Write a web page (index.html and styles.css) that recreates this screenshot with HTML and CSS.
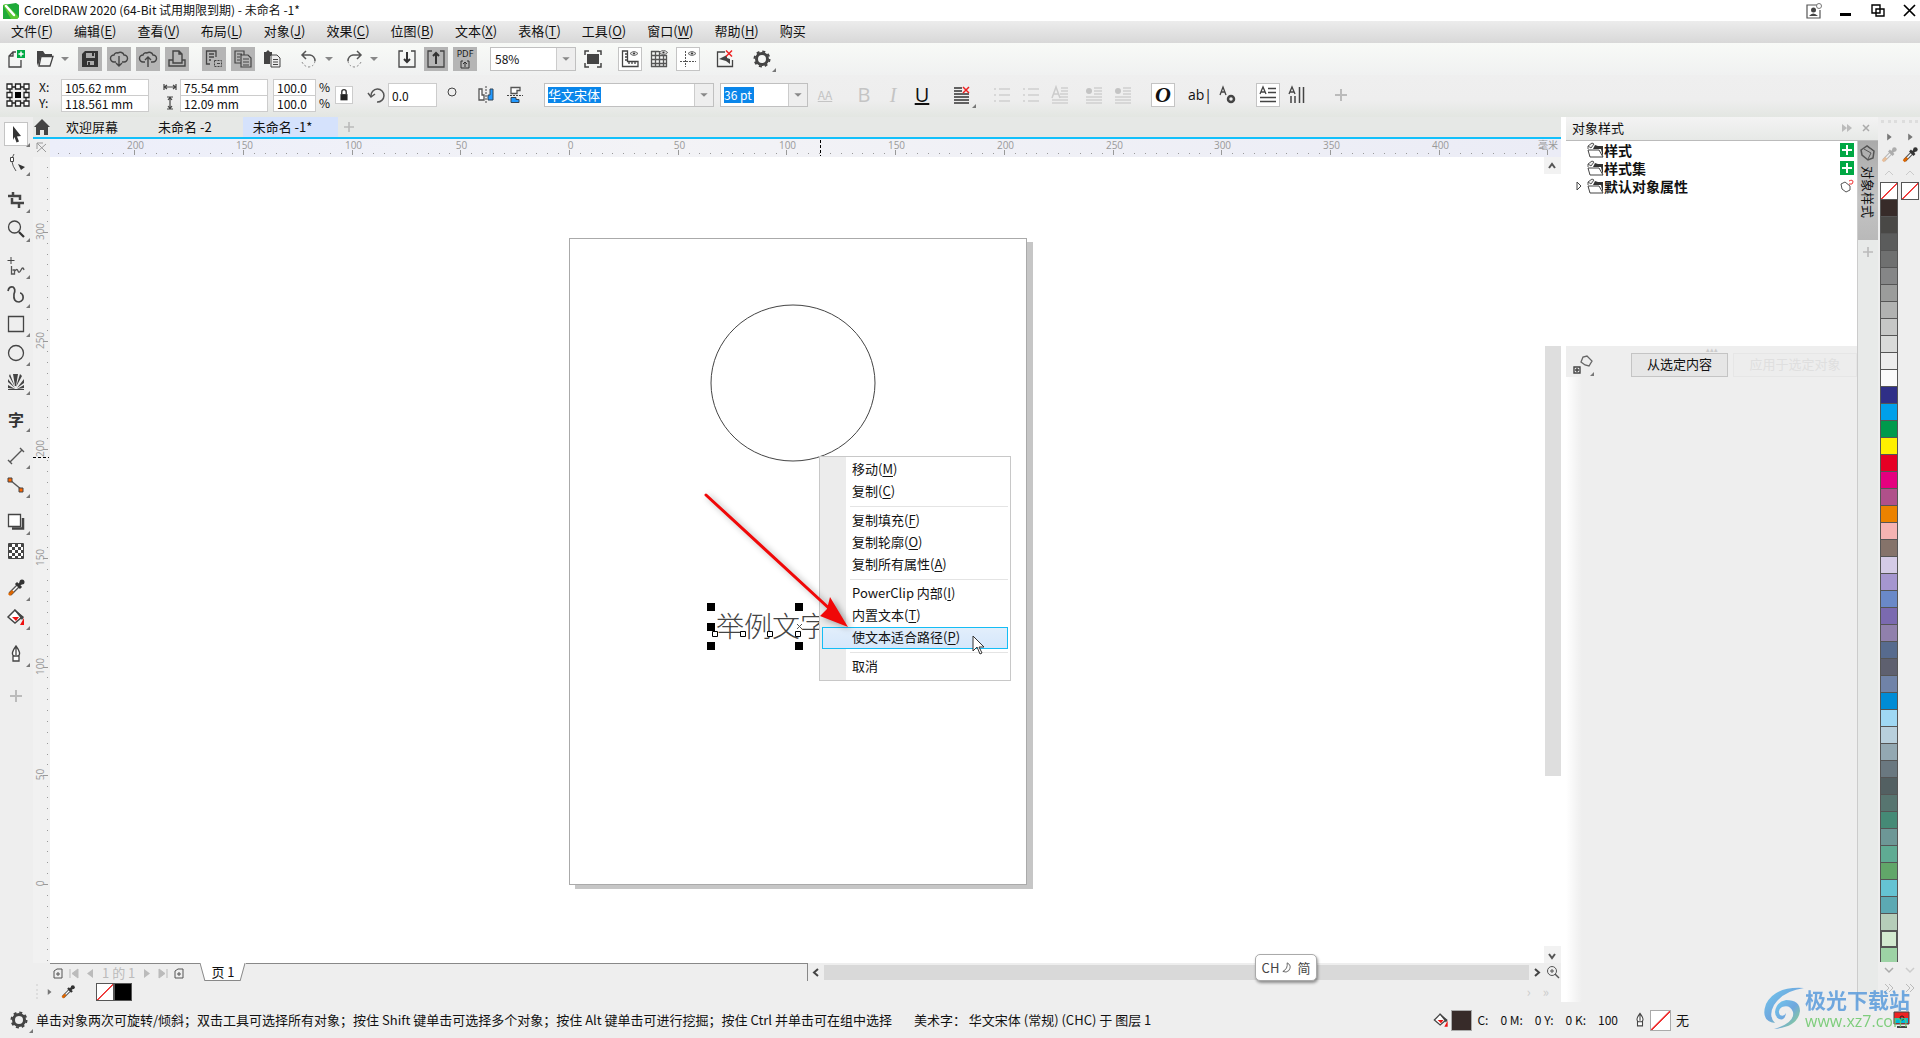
FILE: index.html
```html
<!DOCTYPE html>
<html lang="zh-Hans">
<head>
    <meta charset="UTF-8">
    <meta name="viewport" content="width=device-width, initial-scale=1.0">
    <title>CorelDRAW 2020</title>
    <link rel="stylesheet" href="styles.css">
</head>
<body>
    <svg class="sprite" aria-hidden="true">
        <symbol id="i-new" viewBox="0 0 24 24"><path d="M12 5H9L5 9v11h12v-7M9 5v4H5" fill="none" stroke="#444" stroke-width="1.3"/><path d="M13 3h8v8h-8z" fill="#0a4"/><path d="M17 4.500v5M14.500 7h5" stroke="#fff" stroke-width="1.500"/></symbol>
        <symbol id="i-open" viewBox="0 0 24 24"><path d="M4 4h6l2 3h7v2H8L5 19l-1-3z" fill="#444"/><path d="M8 9.500h12L17 19H6z" fill="none" stroke="#444" stroke-width="1.300"/></symbol>
        <symbol id="i-caret" viewBox="0 0 16 24"><path d="M4 10h8l-4 4z" fill="#888"/></symbol>
        <symbol id="i-save" viewBox="0 0 24 24"><path d="M4 7l3-3h13v16H4z" fill="#333"/><path d="M8 6h9v5H8zM9 14h7v4H9z" fill="#aaa"/><path d="M14 6h2v3h-2zM10 15h2v3h-2z" fill="#333"/></symbol>
        <symbol id="i-down" viewBox="0 0 24 24"><path d="M9 15H7a3.500 3.500 0 0 1 0-7 3 3 0 0 1 4-2 4 4 0 0 1 6 2 3.500 3.500 0 0 1 0 7h-2M12 9v10M9 16l3 3 3-3" fill="none" stroke="#444" stroke-width="1.400"/></symbol>
        <symbol id="i-up" viewBox="0 0 24 24"><path d="M9 15H7a3.500 3.500 0 0 1 0-7 3 3 0 0 1 4-2 4 4 0 0 1 6 2 3.500 3.500 0 0 1 0 7h-2M12 20V10M9 13l3-3 3 3" fill="none" stroke="#444" stroke-width="1.400"/></symbol>
        <symbol id="i-print" viewBox="0 0 24 24"><path d="M8 13V4h6l3 3v6M14 4v3h3M4 13h4v3h9v-3h3v6H4z" fill="none" stroke="#444" stroke-width="1.400"/></symbol>
        <symbol id="i-cut" viewBox="0 0 24 24"><path d="M8 17H4.500V4H14v6M7 7h5M7 10h5M7 13h2" fill="none" stroke="#444" stroke-width="1.300"/><path d="M12.500 13.500h7v6h-7z" fill="none" stroke="#444" stroke-dasharray="2 1"/><path d="M15 16.500h3" stroke="#444"/></symbol>
        <symbol id="i-copy" viewBox="0 0 24 24"><path d="M10 16H4V4h9v4M6 7h5M6 10h3M6 13h3M10 8h7l3 3v9H10zM12 12h6M12 15h6M12 18h6" fill="none" stroke="#444" stroke-width="1.200"/></symbol>
        <symbol id="i-paste" viewBox="0 0 24 24"><path d="M4 5h2l2-2 2 2h2v4H10v8H4z" fill="#444"/><path d="M11 8h6l3 3v9h-9zM13 12.500h5M13 15h5M13 17.500h5" fill="#eee" stroke="#444"/></symbol>
        <symbol id="i-undo" viewBox="0 0 24 24"><path d="M9 4L5 8l4 4M5.500 8H13a6 6 0 0 1 5 6" fill="none" stroke="#555" stroke-width="1.500"/><path d="M18 14q-1 6-7 6-4-1-6-5" fill="none" stroke="#888" stroke-dasharray="2 2"/></symbol>
        <symbol id="i-redo" viewBox="0 0 24 24"><path d="M15 4l4 4-4 4M18.500 8H11a6 6 0 0 0-5 6" fill="none" stroke="#555" stroke-width="1.500"/><path d="M6 14q1 6 7 6 4-1 6-5" fill="none" stroke="#888" stroke-dasharray="2 2"/></symbol>
        <symbol id="i-import" viewBox="0 0 24 24"><path d="M8 4H4v16h16V4h-4" fill="none" stroke="#444" stroke-width="1.300"/><path d="M12 5v10M9 12l3 3 3-3" fill="none" stroke="#333" stroke-width="2"/></symbol>
        <symbol id="i-export" viewBox="0 0 24 24"><path d="M8 4H4v16h16V4h-4" fill="none" stroke="#444" stroke-width="1.300"/><path d="M12 17V6M9 9l3-3 3 3" fill="none" stroke="#333" stroke-width="2"/></symbol>
        <symbol id="i-fit" viewBox="0 0 24 24"><path d="M6 7h12v10H6z" fill="#444"/><path d="M4 8V4h4M16 4h4v4M20 16v4h-4M8 20H4v-4" fill="none" stroke="#444" stroke-width="1.500"/></symbol>
        <symbol id="i-eye" viewBox="0 0 10 6"><path d="M0 3q5-5 10 0-5 5-10 0z" fill="#ddd" stroke="#555"/><circle cx="5" cy="3" r="1.300" fill="#333"/></symbol>
        <symbol id="i-ruler" viewBox="0 0 24 24"><path d="M4.500 4v15.500H20v-5H9.500V4zM9 7H7M9 10H7M9 13H7M11 15v2M14 15v2M17 15v2" fill="none" stroke="#444" stroke-width="1.300"/><use href="#i-eye" x="12" y="4" width="8" height="5"/></symbol>
        <symbol id="i-grid" viewBox="0 0 24 24"><path d="M4 4.500h8M4 8.500h16M4 12.500h16M4 16.500h16M4 19.500h16M4.500 4v16M8.500 4v16M12.500 4v16M16.500 8v12M19.500 8v12" stroke="#555" stroke-width="1.300"/><use href="#i-eye" x="12" y="3" width="9" height="5"/></symbol>
        <symbol id="i-guide" viewBox="0 0 24 24"><path d="M4 14.500h16M9.500 4v16" stroke="#555" stroke-dasharray="2 1"/><use href="#i-eye" x="12" y="4" width="8" height="5"/></symbol>
        <symbol id="i-snap" viewBox="0 0 24 24"><path d="M12 5H4.500v14.500h15V13" fill="none" stroke="#444" stroke-width="1.300"/><path d="M6 12l8-4v3l3 1v5l-4-3z" fill="#444"/><path d="M13 3.500l6 6M19 3.500l-6 6" stroke="#e22" stroke-width="1.500"/></symbol>
        <symbol id="i-gear" viewBox="0 0 24 24"><circle cx="12" cy="12" r="5.500" fill="none" stroke="#444" stroke-width="3"/><circle cx="12" cy="12" r="7.500" fill="none" stroke="#444" stroke-width="2" stroke-dasharray="3 2.900"/></symbol>
        <symbol id="i-origin" viewBox="0 0 24 24"><path d="M4 4h16v16H4z" fill="none" stroke="#222" stroke-width="1.300"/><path d="M1 1h5v5H1zM9.500 1h5v5h-5zM18 1h5v5h-5zM1 9.500h5v5H1zM18 9.500h5v5h-5zM1 18h5v5H1zM9.500 18h5v5h-5zM18 18h5v5h-5z" fill="#fff" stroke="#222" stroke-width="1.300"/><path d="M9 9h6v6H9z"/></symbol>
        <symbol id="i-wide" viewBox="0 0 14 14"><path d="M1 4v6M13 4v6M1 7h12M4 5L1.500 7 4 9M10 5l2.500 2L10 9" fill="none" stroke="#444" stroke-width="1.200"/></symbol>
        <symbol id="i-tall" viewBox="0 0 14 14"><path d="M4 1h6M4 13h6M7 1v12M5 4l2-2.500L9 4M5 10l2 2.500L9 10" fill="none" stroke="#444" stroke-width="1.200"/></symbol>
        <symbol id="i-lock" viewBox="0 0 18 18"><path d="M5 8h8v7H5z" fill="#222"/><path d="M6.500 8V5.500a2.500 2.500 0 0 1 5 0V8" fill="none" stroke="#333" stroke-width="1.500"/></symbol>
        <symbol id="i-rot" viewBox="0 0 24 24"><path d="M7 13a6.500 6.500 0 1 1 6 6" fill="none" stroke="#555" stroke-width="1.500"/><path d="M4 10l3 4 4-3" fill="none" stroke="#555" stroke-width="1.500"/></symbol>
        <symbol id="i-mirh" viewBox="0 0 24 24"><path d="M5 6v11h5v-5H8V6z" fill="#fff" stroke="#555" stroke-width="1.300"/><path d="M19 6v11h-5v-5h2V6z" fill="#29f" stroke="#345"/><path d="M12 3v18" stroke="#444" stroke-dasharray="2 1"/></symbol>
        <symbol id="i-mirv" viewBox="0 0 24 24"><path d="M17 4.500H8v6h6v-3h3z" fill="#fff" stroke="#555" stroke-width="1.300"/><path d="M16 19.500H8v-5h5v2h3z" fill="#29f" stroke="#345"/><path d="M4 12.500h16" stroke="#444" stroke-dasharray="2 1"/></symbol>
        <symbol id="i-nolist" viewBox="0 0 24 24"><path d="M4 5h8M4 8h8M4 11h15M4 14h15M4 17h15M4 20h15" stroke="#333" stroke-width="1.700"/><path d="M13 4l6 6M19 4l-6 6" stroke="#e22" stroke-width="1.500"/></symbol>
        <symbol id="i-list" viewBox="0 0 24 24"><path d="M9 6h11M9 12h11M9 18h11M4 6h2M4 12h2M4 18h2" stroke="#d0d0d0" stroke-width="1.500"/></symbol>
        <symbol id="i-drop" viewBox="0 0 24 24"><path d="M13 5h7M13 8h7M12 11h8M12 14h8M4 17h16M4 20h16" stroke="#d0d0d0" stroke-width="1.500"/><path d="M4 15l4-11 4 11M6 11h4" fill="none" stroke="#ccc" stroke-width="1.500"/></symbol>
        <symbol id="i-indent" viewBox="0 0 24 24"><path d="M12 5h8M12 8h8M12 11h8M4 14h16M4 17h16M4 20h16" stroke="#d0d0d0" stroke-width="1.500"/><circle cx="7" cy="8" r="3" fill="#c4c4c4"/></symbol>
        <symbol id="i-agear" viewBox="0 0 24 24"><path d="M4 12L7 4l3 8M5 9h4" fill="none" stroke="#444" stroke-width="1.300"/><circle cx="15" cy="16" r="3" fill="none" stroke="#444" stroke-width="2.500"/></symbol>
        <symbol id="i-horz" viewBox="0 0 24 24"><path d="M4 11l3-7 3 7M5 9h4" fill="none" stroke="#444" stroke-width="1.300"/><path d="M12 5.500h8M12 9.500h8M4 14.500h16M4 18.500h16" stroke="#444" stroke-width="1.500"/></symbol>
        <symbol id="i-vert" viewBox="0 0 24 24"><path d="M4 11l3-7 3 7M5 9h4" fill="none" stroke="#444" stroke-width="1.300"/><path d="M6 13v7M10 13v7M14.500 4v16M18.500 4v16" stroke="#444" stroke-width="1.500"/></symbol>
        <symbol id="i-plus" viewBox="0 0 24 24"><path d="M12 6v12M6 12h12" stroke="#bbb" stroke-width="2"/></symbol>
        <symbol id="i-pick" viewBox="0 0 24 24"><path d="M9 4l8 10-4 .5 2 5-2.500 1-2-5.500L9 18z" fill="#333"/></symbol>
        <symbol id="i-shape" viewBox="0 0 24 24"><path d="M10 3q-5 7 2 17" fill="none" stroke="#555"/><path d="M6.500 6.500h3v4h-3z" fill="#fff" stroke="#444"/><path d="M14 13l7 3-4 3z" fill="#333"/></symbol>
        <symbol id="i-crop" viewBox="0 0 24 24"><path d="M4 8h5V4M9 8h7v4M8 10v5h6M20 15h-5v5" fill="none" stroke="#444" stroke-width="2.500"/></symbol>
        <symbol id="i-zoom" viewBox="0 0 24 24"><circle cx="10.500" cy="10" r="6" fill="none" stroke="#444" stroke-width="1.300"/><path d="M15 15l5 5" stroke="#333" stroke-width="2.200"/></symbol>
        <symbol id="i-free" viewBox="0 0 24 24"><path d="M7 3v7M3.500 6.500h7" fill="none" stroke="#444"/><path d="M7.500 12v8h3v-4h-2M11 17q2-3 3 0t3-1 3 0" fill="none" stroke="#555" stroke-width="1.300"/></symbol>
        <symbol id="i-art" viewBox="0 0 24 24"><path d="M4 8q1-5 5-4 3 2 1 7-1 8 5 8 5-1 4-6-1-3-3-3" fill="none" stroke="#444" stroke-width="1.700"/></symbol>
        <symbol id="i-rect" viewBox="0 0 24 24"><path d="M4.500 4.500h15v15h-15z" fill="none" stroke="#444" stroke-width="1.300"/></symbol>
        <symbol id="i-ell" viewBox="0 0 24 24"><circle cx="12" cy="12" r="7.500" fill="none" stroke="#444" stroke-width="1.300"/></symbol>
        <symbol id="i-fan" viewBox="0 0 24 24"><path d="M11 19L4 15v3zM11 18L4 9v3zM11 17L6 4 5 6zM11 16L9 4h5l-2 12zM12 17l4-13 2 2zM13 18l7-9v4zM13 19l7-4v3zM4 19h16v1H4z" fill="#444"/></symbol>
        <symbol id="i-line" viewBox="0 0 24 24"><path d="M6 18L18 6M4 16l4 4M16 4l4 4" stroke="#555" stroke-width="1.400"/></symbol>
        <symbol id="i-conn" viewBox="0 0 24 24"><path d="M6 7l12 10" stroke="#555" stroke-width="1.400"/><path d="M4 5h4v4H4zM15 15h4v4h-4z" fill="#f60" stroke="#444"/></symbol>
        <symbol id="i-shad" viewBox="0 0 24 24"><path d="M8 18.500h11V8" fill="none" stroke="#444" stroke-width="2.500"/><path d="M4.500 4.500h12v12h-12z" fill="#fff" stroke="#444" stroke-width="1.300"/></symbol>
        <symbol id="i-trans" viewBox="0 0 24 24"><path d="M4.500 4.500h15v15h-15z" fill="#fff" stroke="#444"/><path d="M5 6.500h14M5 12.500h14M5 18.500h14" stroke="#444" stroke-width="3" stroke-dasharray="3 3"/><path d="M8 9.500h11M8 15.500h11" stroke="#444" stroke-width="3" stroke-dasharray="3 3"/></symbol>
        <symbol id="i-drip" viewBox="0 0 24 24"><path d="M6 18l9-9" stroke="#555" stroke-width="4"/><path d="M8.500 15.500l6-6" stroke="#fff" stroke-width="1.500"/><path d="M5 19l4-4" stroke="#d60" stroke-width="3"/><path d="M12 7l5 5M14 10l4-4" stroke="#333" stroke-width="3"/><circle cx="18" cy="6" r="2.500" fill="#333"/></symbol>
        <symbol id="i-fill" viewBox="0 0 24 24"><path d="M4 12l7-7 7 7-7 6z" fill="#fff" stroke="#444" stroke-width="1.500"/><path d="M10 4l10 8-2 3-7-9z" fill="#444"/><path d="M8 12h7l-3 4zM20 13v7h-4z" fill="#e11"/></symbol>
        <symbol id="i-pen" viewBox="0 0 24 24"><path d="M12 4q6 8 2 10h-4Q6 12 12 4zM9 14h6v5H9zM12 6v7" fill="#fff" stroke="#444" stroke-width="1.300"/></symbol>
        <symbol id="i-folder" viewBox="0 0 18 18"><path d="M7 8l2-4 3 1h5v12l-2-9z" fill="#333"/><path d="M2 9h11l4 7H4z" fill="#fff" stroke="#444"/><path d="M2 5l4-3 2 1-3 4zM2 5v3" fill="#eee" stroke="#555"/></symbol>
        <symbol id="i-style" viewBox="0 0 18 18"><path d="M2 6l6-4 7 5-1 7-5 2-6-5z" fill="none" stroke="#555" stroke-width="1.500"/><path d="M5 5l7 4-3 6M8 2l7 5" fill="none" stroke="#555"/></symbol>
    </svg>

    <header class="title-bar">
        <svg class="logo" viewBox="0 0 18 18"><path d="M1 3l13-2 3 2v12l-2 2H1z" fill="#1faa3a"/><path d="M1 3l3-1 13 13-2 2H9z" fill="#5cc832"/><path d="M4 4l8 9" stroke="#fff" stroke-width="2.500" stroke-linecap="round"/></svg>
        <h1>CorelDRAW 2020 (64-Bit 试用期限到期) - 未命名 -1*</h1>
        <div class="window-buttons">
            <button aria-label="登录"><svg viewBox="0 0 24 20"><path d="M16 4H5v13h13V9" fill="none" stroke="#555" stroke-width="1.200"/><circle cx="11.500" cy="9" r="2.500" fill="#444"/><path d="M7 15q4-5 9 0z" fill="#444"/><circle cx="17" cy="5" r="2.500" fill="#fff" stroke="#777"/></svg></button>
            <button aria-label="最小化"><svg viewBox="0 0 24 20"><path d="M6 13.500h11" stroke="#000" stroke-width="3"/></svg></button>
            <button aria-label="还原"><svg viewBox="0 0 24 20"><path d="M6 4h8v8H6zM10 8h8v7h-8z" fill="#fff" stroke="#000" stroke-width="1.400"/></svg></button>
            <button aria-label="关闭"><svg viewBox="0 0 24 20"><path d="M6 4l11 11M17 4L6 15" stroke="#000" stroke-width="1.700"/></svg></button>
        </div>
    </header>

    <nav class="menu-bar">
        <button>文件(<u>F</u>)</button>
        <button>编辑(<u>E</u>)</button>
        <button>查看(<u>V</u>)</button>
        <button>布局(<u>L</u>)</button>
        <button>对象(<u>J</u>)</button>
        <button>效果(<u>C</u>)</button>
        <button>位图(<u>B</u>)</button>
        <button>文本(<u>X</u>)</button>
        <button>表格(<u>T</u>)</button>
        <button>工具(<u>O</u>)</button>
        <button>窗口(<u>W</u>)</button>
        <button>帮助(<u>H</u>)</button>
        <button>购买</button>
    </nav>

    <div class="toolbar standard">
        <div class="group"><button class="tool" aria-label="新建"><svg><use href="#i-new"/></svg></button>
            <div class="split"><button class="tool" aria-label="打开"><svg><use href="#i-open"/></svg></button><button class="caret" aria-label="最近"><svg><use href="#i-caret"/></svg></button></div>
            <button class="tool dark" aria-label="保存"><svg><use href="#i-save"/></svg></button>
            <button class="tool dark" aria-label="从云下载"><svg><use href="#i-down"/></svg></button>
            <button class="tool dark" aria-label="上传到云"><svg><use href="#i-up"/></svg></button>
            <button class="tool dark" aria-label="打印"><svg><use href="#i-print"/></svg></button></div>
        <div class="group"><button class="tool dark" aria-label="剪切"><svg><use href="#i-cut"/></svg></button>
            <button class="tool dark" aria-label="复制"><svg><use href="#i-copy"/></svg></button>
            <button class="tool" aria-label="粘贴"><svg><use href="#i-paste"/></svg></button></div>
        <div class="group"><div class="split"><button class="tool" aria-label="撤消"><svg><use href="#i-undo"/></svg></button><button class="caret" aria-label="撤消列表"><svg><use href="#i-caret"/></svg></button></div><div class="split"><button class="tool" aria-label="重做"><svg><use href="#i-redo"/></svg></button><button class="caret" aria-label="重做列表"><svg><use href="#i-caret"/></svg></button></div></div>
        <div class="group"><button class="tool" aria-label="导入"><svg><use href="#i-import"/></svg></button>
            <button class="tool dark" aria-label="导出"><svg><use href="#i-export"/></svg></button>
            <button class="tool dark pdf" aria-label="发布为 PDF"><span>PDF</span><svg viewBox="0 0 10 9"><path d="M3 1H1v7h8V1H7M5 7V2M3 4l2-2 2 2" fill="none" stroke="#333"/></svg></button></div>
        <div class="group"><div class="combo zoom-level"><input aria-label="缩放级别" value="58%"><button aria-label="展开"><svg><use href="#i-caret"/></svg></button></div>
            <button class="tool" aria-label="全屏预览"><svg><use href="#i-fit"/></svg></button></div>
        <div class="group"><button class="tool on" aria-label="标尺"><svg><use href="#i-ruler"/></svg></button>
            <button class="tool" aria-label="网格"><svg><use href="#i-grid"/></svg></button>
            <button class="tool on" aria-label="辅助线"><svg><use href="#i-guide"/></svg></button></div>
        <div class="group"><button class="tool" aria-label="贴齐关闭"><svg><use href="#i-snap"/></svg></button></div>
        <div class="group"><button class="tool fly" aria-label="选项"><svg><use href="#i-gear"/></svg></button></div>
    </div>

    <div class="toolbar property">
        <button class="tool" aria-label="对象原点"><svg><use href="#i-origin"/></svg></button>
        <div class="pair position">
            <label for="posX">X:</label><input id="posX" value="105.62 mm">
            <label for="posY">Y:</label><input id="posY" value="118.561 mm">
        </div>
        <div class="pair size">
            <label for="sizeW"><svg><use href="#i-wide"/></svg></label><input id="sizeW" aria-label="宽度" value="75.54 mm">
            <label for="sizeH"><svg><use href="#i-tall"/></svg></label><input id="sizeH" aria-label="高度" value="12.09 mm">
        </div>
        <div class="pair scale">
            <input id="scaleX" value="100.0"><label for="scaleX">%</label>
            <input id="scaleY" value="100.0"><label for="scaleY">%</label>
        </div>
        <button class="lock" aria-label="锁定比率"><svg><use href="#i-lock"/></svg></button>
        <div class="angle">
            <label for="angle"><svg><use href="#i-rot"/></svg></label><input id="angle" aria-label="旋转角度" value="0.0"><svg class="degree" viewBox="0 0 12 24"><circle cx="6" cy="9" r="4" fill="none" stroke="#444"/></svg>
        </div>
        <div class="group mirror"><button class="tool" aria-label="水平镜像"><svg><use href="#i-mirh"/></svg></button>
            <button class="tool" aria-label="垂直镜像"><svg><use href="#i-mirv"/></svg></button></div>
        <div class="combo font-name"><input class="selected" aria-label="字体" value="华文宋体"><button aria-label="展开"><svg><use href="#i-caret"/></svg></button></div>
        <div class="combo font-size"><input class="selected" aria-label="字体大小" value="36 pt"><button aria-label="展开"><svg><use href="#i-caret"/></svg></button></div>
        <button class="tool off underlined" aria-label="可变字体">AA</button>
        <div class="group style-group"><button class="tool off glyph">B</button>
            <button class="tool off glyph"><i>I</i></button>
            <button class="tool glyph"><u>U</u></button></div>
        <button class="tool fly" aria-label="文本对齐"><svg><use href="#i-nolist"/></svg></button>
        <div class="group lists"><button class="tool" aria-label="项目符号"><svg><use href="#i-list"/></svg></button>
            <button class="tool" aria-label="编号"><svg><use href="#i-list"/></svg></button>
            <button class="tool" aria-label="首字下沉"><svg><use href="#i-drop"/></svg></button></div>
        <div class="group indents"><button class="tool" aria-label="减少缩进"><svg><use href="#i-indent"/></svg></button>
            <button class="tool" aria-label="增加缩进"><svg><use href="#i-indent"/></svg></button></div>
        <button class="tool on open-o">O</button>
        <div class="group text-edit"><button class="tool edit-text">ab|</button>
            <button class="tool" aria-label="文本属性"><svg><use href="#i-agear"/></svg></button></div>
        <div class="group direction"><button class="tool on" aria-label="水平文本"><svg><use href="#i-horz"/></svg></button><button class="tool" aria-label="垂直文本"><svg><use href="#i-vert"/></svg></button></div>
        <button class="tool more" aria-label="自定义"><svg><use href="#i-plus"/></svg></button>
    </div>

    <main class="workspace">
        <aside class="toolbox">
            <button class="tool on fly" aria-label="选择"><svg><use href="#i-pick"/></svg></button>
            <button class="tool fly" aria-label="形状"><svg><use href="#i-shape"/></svg></button>
            <button class="tool fly first" aria-label="裁剪"><svg><use href="#i-crop"/></svg></button>
            <button class="tool fly" aria-label="缩放"><svg><use href="#i-zoom"/></svg></button>
            <button class="tool fly first" aria-label="手绘"><svg><use href="#i-free"/></svg></button>
            <button class="tool fly" aria-label="艺术笔"><svg><use href="#i-art"/></svg></button>
            <button class="tool fly" aria-label="矩形"><svg><use href="#i-rect"/></svg></button>
            <button class="tool fly" aria-label="椭圆形"><svg><use href="#i-ell"/></svg></button>
            <button class="tool fly" aria-label="多边形"><svg><use href="#i-fan"/></svg></button>
            <button class="tool fly first text-tool">字</button>
            <button class="tool fly first" aria-label="平行度量"><svg><use href="#i-line"/></svg></button>
            <button class="tool fly" aria-label="连接器"><svg><use href="#i-conn"/></svg></button>
            <button class="tool fly first" aria-label="阴影"><svg><use href="#i-shad"/></svg></button>
            <button class="tool" aria-label="透明度"><svg><use href="#i-trans"/></svg></button>
            <button class="tool fly first" aria-label="颜色滴管"><svg><use href="#i-drip"/></svg></button>
            <button class="tool fly" aria-label="交互式填充"><svg><use href="#i-fill"/></svg></button>
            <button class="tool fly first" aria-label="轮廓笔"><svg><use href="#i-pen"/></svg></button>
            <button class="tool last" aria-label="自定义"><svg><use href="#i-plus"/></svg></button>
        </aside>

        <section class="document">
            <div class="tabs">
                <button class="home" aria-label="主页"><svg viewBox="0 0 18 18"><path d="M9 1l8 8h-2v8h-4v-5H7v5H3V9H1z" fill="#444"/></svg></button>
                <button class="tab">欢迎屏幕</button>
                <button class="tab">未命名 -2</button>
                <button class="tab active">未命名 -1*</button>
                <button class="add" aria-label="新建标签"><svg><use href="#i-plus"/></svg></button>
            </div>
            <div class="editor">
                <div class="corner"><svg viewBox="0 0 17 18"><path d="M4 4l9 9M4 4h6M4 4v6M13 5l-9 8" fill="none" stroke="#999"/></svg></div>
                <svg class="ruler-h" id="rulerH"></svg>
                <svg class="ruler-v" id="rulerV"></svg>
                <div class="canvas">
                    <div class="page"></div>
                    <svg class="circle" viewBox="0 0 166 159"><ellipse cx="83" cy="79" rx="82" ry="78" fill="none" stroke="#444"/></svg>
                    <div class="art-text">举例文字</div>
                    <svg class="handles" viewBox="0 0 100 50"><path d="M0 0h8v8H0zM88 0h8v8h-8zM0 20h8v8H0zM0 39h8v8H0zM88 39h8v8h-8z"/><path d="M5.500 28.500h5v5h-5zM33.500 28.500h5v5h-5zM60.500 28.500h5v5h-5zM88.500 28.500h5v5h-5z" fill="#fff" stroke="#000"/><path d="M90 21l5 5M95 21l-5 5" stroke="#555"/></svg>
                    <div class="context-menu">
                        <button>移动(<u>M</u>)</button>
                        <button>复制(<u>C</u>)</button>
                        <hr>
                        <button>复制填充(<u>F</u>)</button>
                        <button>复制轮廓(<u>O</u>)</button>
                        <button>复制所有属性(<u>A</u>)</button>
                        <hr>
                        <button>PowerClip 内部(<u>I</u>)</button>
                        <button>内置文本(<u>T</u>)</button>
                        <button class="hot">使文本适合路径(<u>P</u>)</button>
                        <hr>
                        <button>取消</button>
                    </div>
                    <svg class="pointer-arrow" viewBox="0 0 150 140"><path d="M4 4l126 116" stroke="#f00808" stroke-width="3" stroke-linecap="round"/><path d="M146 136l-28-11 7-7 3-12z" fill="#f00808"/></svg>
                    <svg class="cursor" viewBox="0 0 14 20"><path d="M1 1v15l4-4 3 7 2-1-3-6h5z" fill="#fff" stroke="#333"/></svg>
                </div>
                <div class="scroll-v">
                    <button aria-label="向上"><svg viewBox="0 0 16 17"><path d="M5 11l3-4 3 4" fill="none" stroke="#555" stroke-width="2"/></svg></button>
                    <div class="track-v"><div class="thumb-v"></div></div>
                    <button aria-label="向下"><svg viewBox="0 0 16 17"><path d="M5 8l3 4 3-4" fill="none" stroke="#555" stroke-width="2"/></svg></button>
                </div>
            </div>
            <div class="page-bar">
                <div class="page-nav">
                    <button aria-label="前加页"><svg viewBox="0 0 16 16"><path d="M4 6l3-2h5v9H4zM8 7v4M6 9h4" fill="none" stroke="#555"/></svg></button>
                    <button aria-label="首页"><svg viewBox="0 0 16 16"><path d="M4 4v9M12 4v9L6 8.500z" fill="#bbb" stroke="#bbb"/></svg></button>
                    <button aria-label="上一页"><svg viewBox="0 0 16 16"><path d="M11 4v9L5 8.500z" fill="#bbb"/></svg></button>
                    <span>1 的 1</span>
                    <button aria-label="下一页"><svg viewBox="0 0 16 16"><path d="M5 4v9l6-4.500z" fill="#bbb"/></svg></button>
                    <button aria-label="末页"><svg viewBox="0 0 16 16"><path d="M12 4v9M4 4v9l6-4.500z" fill="#bbb" stroke="#bbb"/></svg></button>
                    <button aria-label="后加页"><svg viewBox="0 0 16 16"><path d="M4 6l3-2h5v9H4zM8 7v4M6 9h4" fill="none" stroke="#555"/></svg></button>
                </div>
                <button class="page-tab"><svg viewBox="0 0 48 17" preserveAspectRatio="none"><path d="M0 0l5 16.500h37L47 0" fill="#fff" stroke="#888"/></svg><span>页 1</span></button>
                <div class="page-rest"></div>
                <div class="scroll-h">
                    <button aria-label="向左"><svg viewBox="0 0 16 16"><path d="M10 5L6 8.500 10 12" fill="none" stroke="#444" stroke-width="2"/></svg></button>
                    <div class="thumb-h"></div>
                    <button aria-label="向右"><svg viewBox="0 0 16 16"><path d="M6 5l4 3.500L6 12" fill="none" stroke="#444" stroke-width="2"/></svg></button>
                    <button aria-label="导航器"><svg viewBox="0 0 16 16"><circle cx="7" cy="7" r="4.500" fill="none" stroke="#555"/><path d="M10 10l4 4" stroke="#555" stroke-width="1.500"/><path d="M5 7h4M7 5v4" stroke="#555"/></svg></button>
                </div>
            </div>
            <div class="doc-palette">
                <span class="grip"></span>
                <svg class="play" viewBox="0 0 16 20"><path d="M5 6v8l5-4z" fill="#777"/></svg>
                <svg class="drip" viewBox="2 2 20 20"><use href="#i-drip" width="24" height="24"/></svg>
                <button class="swatch none" aria-label="无"></button><button class="swatch black" aria-label="黑"></button>
                <span class="chevrons"><span>›</span><span>»</span></span>
            </div>
        </section>

        <aside class="docker">
            <div class="docker-head"><h2>对象样式</h2><button aria-label="折叠"><svg viewBox="0 0 12 12"><path d="M1 2v8l5-4zM6 2v8l5-4z" fill="#bbb"/></svg></button><button aria-label="关闭"><svg viewBox="0 0 12 12"><path d="M3 3l6 6M9 3l-6 6" stroke="#aaa" stroke-width="1.500"/></svg></button></div>
            <div class="docker-body">
                <ul class="tree">
                    <li><i class="expander"></i><svg><use href="#i-folder"/></svg><span>样式</span><button class="add-style" aria-label="新建样式"><svg viewBox="0 0 14 14"><path d="M7 2v10M2 7h10" stroke="#fff" stroke-width="2"/></svg></button></li>
                    <li><i class="expander"></i><svg><use href="#i-folder"/></svg><span>样式集</span><button class="add-style" aria-label="新建样式集"><svg viewBox="0 0 14 14"><path d="M7 2v10M2 7h10" stroke="#fff" stroke-width="2"/></svg></button></li>
                    <li><i class="expander"><svg viewBox="0 0 12 18"><path d="M4 5v8l4-4z" fill="#fff" stroke="#444"/></svg></i><svg><use href="#i-folder"/></svg><span>默认对象属性</span><button aria-label="还原"><svg viewBox="0 0 14 14"><path d="M1 5l4-2 5 4v4l-4 2-4-3z" fill="none" stroke="#555"/><path d="M9 2q4-2 4 1t-4 2" fill="none" stroke="#e33"/></svg></button></li>
                </ul>
                <div class="splitter">▴▴▴</div>
                <div class="apply-row">
                    <button class="pick-style" aria-label="样式选项"><svg viewBox="0 0 24 24"><path d="M3 14h6v6H3zM6 15v4M4 17h4" fill="none" stroke="#444" stroke-width="1.400"/><path d="M10 9l2-5 4-1 5 5-3 5-4-1z" fill="#eee" stroke="#666" stroke-width="1.300"/><path d="M23 19v4h-4z" fill="#777"/></svg></button>
                    <button class="push">从选定内容</button>
                    <button class="push" disabled>应用于选定对象</button>
                </div>
                <div class="props"></div>
            </div>
        </aside>
        <aside class="docker-tabs">
            <button class="side-tab"><svg><use href="#i-style"/></svg><span>对象样式</span></button>
            <button class="side-add" aria-label="添加"><svg><use href="#i-plus"/></svg></button>
        </aside>
        <aside class="palettes">
            <div class="palette">
                <div class="palette-head"><span class="grip wide"></span><svg viewBox="0 0 18 20"><path d="M7 6v8l5-4z" fill="#777"/></svg><svg class="faint" viewBox="2 2 20 20"><use href="#i-drip" width="24" height="24"/></svg><svg class="faint" viewBox="0 0 18 18"><path d="M5 11l4-4 4 4" fill="none" stroke="#888"/></svg></div>
                <div id="swatches"></div>
                <div class="palette-foot"><svg viewBox="0 0 18 16"><path d="M5 6l4 4 4-4" fill="none" stroke="#aaa" stroke-width="1.500"/></svg><svg viewBox="0 0 18 16"><path d="M5 4l4 4-4 4M9 4l4 4-4 4" fill="none" stroke="#bbb"/></svg></div>
            </div>
            <div class="palette">
                <div class="palette-head"><span class="grip wide"></span><svg viewBox="0 0 18 20"><path d="M7 6v8l5-4z" fill="#777"/></svg><svg viewBox="2 2 20 20"><use href="#i-drip" width="24" height="24"/></svg><svg class="faint" viewBox="0 0 18 18"><path d="M5 11l4-4 4 4" fill="none" stroke="#888"/></svg></div>
                <div><button class="swatch none" aria-label="无"></button></div>
                <div class="palette-foot"><svg viewBox="0 0 18 16"><path d="M5 6l4 4 4-4" fill="none" stroke="#ccc" stroke-width="1.500"/></svg><svg viewBox="0 0 18 16"><path d="M5 4l4 4-4 4M9 4l4 4-4 4" fill="none" stroke="#bbb"/></svg></div>
            </div>
        </aside>
    </main>

    <footer class="status-bar">
        <button class="tool fly" aria-label="状态栏选项"><svg><use href="#i-gear"/></svg></button>
        <p class="hint">单击对象两次可旋转/倾斜；双击工具可选择所有对象；按住 Shift 键单击可选择多个对象；按住 Alt 键单击可进行挖掘；按住 Ctrl 并单击可在组中选择</p>
        <p class="object-info">美术字： 华文宋体 (常规) (CHC) 于 图层 1</p>
        <div class="color-info">
            <svg class="info-icon"><use href="#i-fill"/></svg><span class="chip dark-chip"></span>
            <span class="cmyk"><span>C:</span><span>0 M:</span><span>0 Y:</span><span>0 K:</span><span>100</span></span>
            <svg class="info-icon"><use href="#i-pen"/></svg><span class="chip none"></span><span>无</span>
        </div>
        <svg class="proof" viewBox="0 0 18 18"><path d="M1 1h15v12H1z" fill="#e22" stroke="#444"/><path d="M2 7h13v5H2z" fill="#0bd"/><path d="M4 16h10" stroke="#444" stroke-width="2"/><circle cx="9" cy="7" r="2" fill="none" stroke="#222"/></svg>
    </footer>

    <div class="ime">CH <svg viewBox="0 0 14 14"><path d="M6 1q6 3 2 9-3 3-7 1 6-3 5-10z" fill="none" stroke="#555"/></svg> 简</div>
    <div class="watermark">
        <svg viewBox="0 0 42 44"><defs><linearGradient id="swirl" x1="0" y1="0" x2="1" y2="1"><stop offset="0" stop-color="#5bc3ee"/><stop offset=".5" stop-color="#5a9bdc"/><stop offset="1" stop-color="#7fd66c"/></linearGradient></defs><path d="M41 1Q12-1 3 17q-6 17 9 19-7-7-1-18Q20 4 41 1z" fill="url(#swirl)"/><path d="M12 25q1-10 11-12 14 0 14 11-2 16-26 18 21-6 19-17-3-8-11-5-5 3-2 8 4 2 6-2-1 8-7 6-4-2-4-7z" fill="url(#swirl)"/></svg>
        <div><strong>极光下载站</strong><span>www.xz7.com</span></div>
    </div>
    <script src="script.js"></script>
</body>
</html>
```
FILE: styles.css
```css
* {
    box-sizing: border-box;
}
body {
    margin: 0;
    height: 100vh;
    display: flex;
    flex-direction: column;
    overflow: hidden;
    font: 13px/16px "Noto Sans CJK SC", "Open Sans", sans-serif;
    color: #111;
    background: #eee;
}
h1, h2, p, ul {
    margin: 0;
    padding: 0;
    font-size: 13px;
    font-weight: normal;
}
button, input {
    font: inherit;
    color: inherit;
    margin: 0;
    padding: 0;
    border: 0;
    background: none;
}
svg {
    display: block;
    flex: none;
}
.sprite {
    position: absolute;
    width: 0;
    height: 0;
}

/* title and menu */
.title-bar {
    height: 21px;
    display: flex;
    align-items: center;
    background: #fff;
}
.title-bar h1 {
    margin: 0 0 2px 4px;
    font-size: 12px;
}
.logo {
    width: 18px;
    height: 18px;
    margin-left: 2px;
}
.window-buttons {
    margin: 0 -2px 0 auto;
    display: flex;
    gap: 8px;
}
.window-buttons svg {
    width: 24px;
    height: 20px;
}
.menu-bar {
    height: 22px;
    display: flex;
    gap: 21px;
    padding: 0 0 2px 11px;
    background: linear-gradient(#ececec, #d8d8d8);
}
.menu-bar u, .context-menu u {
    text-underline-offset: 2px;
}
.menu-bar button {
    white-space: nowrap;
}

/* toolbars */
.toolbar {
    display: flex;
    align-items: center;
}
.standard {
    height: 32px;
    gap: 13px;
    padding-left: 4px;
    background: linear-gradient(#f8faf7, #f0f1f1);
}
.group {
    display: flex;
    gap: 5px;
}
.split {
    display: flex;
}
.tool {
    position: relative;
    width: 24px;
    height: 24px;
    flex: none;
    border: 1px solid transparent;
}
.tool svg {
    width: 24px;
    height: 24px;
    margin: -1px;
}
.tool.dark {
    background: #b5b5b5;
}
.tool.on {
    background: #fff;
    border-color: #c4c4c4;
}
.tool.off {
    color: #c4c4c4;
}
.fly::after {
    content: "";
    position: absolute;
    right: -3px;
    bottom: -2px;
    border: 2px solid transparent;
    border-right-color: #777;
    border-bottom-color: #777;
}
.caret {
    width: 16px;
    height: 24px;
}
.caret svg {
    width: 16px;
    height: 24px;
}
.pdf {
    display: flex;
    flex-direction: column;
    align-items: center;
    font: 9px/12px "Open Sans", sans-serif;
}
.tool.pdf svg {
    width: 10px;
    height: 9px;
    margin: 0;
}
.combo {
    display: flex;
    align-items: center;
    height: 24px;
    border: 1px solid #c0c0c0;
    background: #fff;
}
.combo input {
    min-width: 0;
    flex: 1;
    height: 16px;
    padding-left: 4px;
}
.combo input.selected {
    flex: none;
    width: 53px;
    margin: 0 auto 0 3px;
    padding: 0;
    color: #fff;
    background: #0a86ea;
}
.combo button {
    width: 19px;
    height: 22px;
    border-left: 1px solid #ccc;
    background: #eee;
}
.combo svg {
    width: 18px;
    height: 22px;
}
.zoom-level {
    width: 86px;
    font-size: 12px;
}
.property {
    height: 42px;
    padding: 0 0 2px 6px;
    background: linear-gradient(#efefef, #eee 60%, #e3e6e2);
}
.pair {
    display: grid;
    grid-template-rows: 16px 16px;
    align-items: center;
    font-size: 12px;
}
.pair input {
    width: 88px;
    height: 17px;
    padding-left: 3px;
    border: 1px solid #ccc;
    background: #fff;
}
.pair svg {
    width: 14px;
    height: 14px;
}
.position {
    grid-template-columns: 22px 88px;
    margin-left: 9px;
}
.size {
    grid-template-columns: 17px 88px;
    margin-left: 14px;
}
.scale {
    grid-template-columns: 46px 12px;
    margin-left: 5px;
}
.scale input {
    width: 43px;
}
.lock {
    width: 18px;
    height: 18px;
    margin-left: 4px;
    border: 1px solid #ccc;
    background: #fff;
}
.lock svg {
    width: 16px;
    height: 16px;
}
.angle {
    display: flex;
    margin-left: 11px;
    font-size: 12px;
}
.angle svg {
    width: 24px;
    height: 24px;
}
.angle input {
    width: 49px;
    height: 24px;
    padding-left: 3px;
    border: 1px solid #ccc;
    background: #fff;
}
.angle .degree {
    width: 12px;
    margin-left: 9px;
}
.mirror {
    margin: 0 17px 0 16px;
}
.font-name {
    width: 170px;
}
.font-size {
    width: 88px;
    margin: 0 5px 0 6px;
    font-size: 12px;
}
.font-size input.selected {
    width: 30px;
}
.underlined {
    font-size: 12px;
    text-decoration: underline;
}
.style-group {
    margin: 0 16px 0 15px;
}
.glyph {
    font: 20px/20px "Open Sans", sans-serif;
}
.glyph i {
    font-family: "Liberation Serif", serif;
}
.lists {
    margin: 0 10px 0 16px;
}
.indents {
    margin-right: 16px;
}
.text-edit {
    margin: 0 16px 0 12px;
}
.direction {
    gap: 5px;
}
.open-o {
    font: italic bold 22px/20px "Liberation Serif", serif;
}
.edit-text {
    font: 14px/20px "Open Sans", sans-serif;
}
.more {
    margin-left: 20px;
}

/* workspace */
.workspace {
    flex: 1;
    min-height: 0;
    display: flex;
}
.toolbox {
    width: 33px;
    display: flex;
    flex-direction: column;
    gap: 5px;
    padding: 5px 0 0 4px;
}
.toolbox .first {
    margin-top: 8px;
}
.toolbox .last {
    margin-top: 13px;
}
.text-tool {
    font-weight: bold;
    font-size: 16px;
    color: #333;
}
.document {
    flex: 1;
    min-width: 0;
    display: flex;
    flex-direction: column;
}
.tabs {
    height: 22px;
    display: flex;
    border-bottom: 2px solid #12c0fb;
    background: #e6e8e6;
}
.home svg {
    width: 18px;
    height: 18px;
}
.tab {
    padding: 0 25px 0 15px;
    white-space: nowrap;
}
.tab.active {
    margin-left: 6px;
    padding: 0 26px 0 10px;
    background: #d5e2fc;
}
.add svg {
    width: 22px;
    height: 20px;
}
.editor {
    flex: 1;
    min-height: 0;
    display: grid;
    grid-template-columns: 17px 1fr 17px;
    grid-template-rows: 18px 1fr;
}
.corner svg {
    width: 17px;
    height: 18px;
}
.ruler-h {
    grid-column: 2 / 4;
    width: 100%;
    height: 18px;
    background: linear-gradient(90deg, #eceefa, #f3f3f6 40%, #ebecf6);
}
.ruler-v {
    width: 17px;
    height: 100%;
    background: #f1f1f1;
}
.ruler-h text, .ruler-v text {
    font: 10px "Open Sans", "Noto Sans CJK SC", sans-serif;
    fill: #999;
    text-anchor: middle;
}
.tick {
    stroke: #999;
}
.marker {
    stroke: #000;
    stroke-dasharray: 3 2;
}
.canvas {
    position: relative;
    overflow: hidden;
    background: #fff;
}
.page {
    position: absolute;
    left: 519px;
    top: 81px;
    width: 458px;
    height: 647px;
    border: 1px solid #aaa;
    background: #fff;
    box-shadow: 6px 4px 0 #c6c6c6;
}
.circle {
    position: absolute;
    left: 660px;
    top: 147px;
    width: 166px;
    height: 159px;
}
.art-text {
    position: absolute;
    left: 666px;
    top: 450px;
    font-size: 28px;
    line-height: 36px;
    font-weight: 300;
    white-space: nowrap;
    color: #444;
}
.handles {
    position: absolute;
    left: 657px;
    top: 446px;
    width: 100px;
    height: 50px;
}
.context-menu {
    position: absolute;
    left: 769px;
    top: 299px;
    width: 192px;
    padding: 2px;
    display: flex;
    flex-direction: column;
    border: 1px solid #c8c8c8;
    background: linear-gradient(90deg, #ececec 26px, #fff 26px);
}
.context-menu button {
    height: 22px;
    padding: 0 0 2px 29px;
    border: 1px solid transparent;
    text-align: left;
}
.context-menu hr {
    width: 158px;
    margin: 3px 0 3px auto;
    border: 0;
    border-top: 1px solid #e4e4e4;
}
.context-menu .hot {
    border-color: #14bdf5;
    background: linear-gradient(#e2eefb, #d5e7fb);
}
.pointer-arrow {
    position: absolute;
    left: 652px;
    top: 334px;
    width: 150px;
    height: 140px;
    filter: drop-shadow(3px 2px 3px rgba(0, 0, 0, 0.35));
}
.cursor {
    position: absolute;
    left: 922px;
    top: 478px;
    width: 14px;
    height: 20px;
}
.scroll-v {
    display: flex;
    flex-direction: column;
    background: #fff;
}
.scroll-v button {
    background: #f2f2f2;
}
.scroll-v svg {
    width: 16px;
    height: 17px;
}
.track-v {
    flex: 1;
    display: flex;
    flex-direction: column;
}
.track-v::before {
    content: "";
    flex: 172;
}
.track-v::after {
    content: "";
    flex: 170;
}
.thumb-v {
    flex: 430;
    margin-left: 1px;
    background: #dedede;
}
.page-bar {
    height: 18px;
    margin-left: 17px;
    display: flex;
}
.page-nav {
    display: flex;
    align-items: center;
    width: 150px;
    border-top: 1px solid #888;
    color: #bbb;
}
.page-nav svg, .scroll-h svg {
    width: 16px;
    height: 16px;
}
.page-nav span {
    margin: 0 4px;
    white-space: nowrap;
    word-spacing: normal;
}
.page-tab {
    position: relative;
    width: 46px;
    height: 18px;
}
.page-tab svg {
    position: absolute;
    inset: 0;
    width: 46px;
    height: 18px;
}
.page-tab span {
    position: relative;
}
.page-rest {
    flex: 561;
    border: solid #888;
    border-width: 1px 1px 0 0;
}
.scroll-h {
    flex: 754;
    display: flex;
    align-items: center;
}
.thumb-h {
    flex: 1;
    height: 15px;
    background: #d9d9d9;
}
.doc-palette {
    height: 21px;
    display: flex;
    align-items: center;
}
.grip {
    width: 5px;
    height: 15px;
    margin: 0 3px;
    border-left: 2px dotted #ddd;
}
.grip.wide {
    width: 16px;
    height: 5px;
    margin: 3px 1px;
    border: 0;
    border-top: 3px dotted #ddd;
}
.play {
    width: 12px;
    height: 20px;
}
.drip {
    width: 16px;
    height: 16px;
    margin: 0 20px 0 4px;
}
.swatch {
    display: block;
    width: 18px;
    height: 18px;
    margin-bottom: -1px;
    border: 1px solid #555;
}
.doc-palette .swatch {
    margin: 0;
}
#swatches .swatch:last-child {
    height: 15px;
    border-bottom: 0;
}
.black {
    background: #000;
}
.none {
    background: linear-gradient(to bottom right, #fff 47%, #e33 48%, #e33 53%, #fff 54%);
}
.chevrons {
    display: flex;
    gap: 12px;
    margin-left: auto;
    padding-right: 12px;
    color: #ccc;
}

/* docker */
.docker {
    width: 297px;
    display: flex;
    flex-direction: column;
    border-left: 5px solid #fff;
}
.docker-head {
    position: relative;
    z-index: 1;
    height: 24px;
    display: flex;
    align-items: center;
    gap: 7px;
    margin-right: -20px;
    padding: 0 6px 2px 6px;
    border-bottom: 1px solid #bbb;
    background: linear-gradient(#f3f3f3, #e7e9e7);
}
.docker-head h2 {
    margin-right: auto;
}
.docker-head svg {
    width: 12px;
    height: 12px;
}
.docker-body {
    flex: 1;
    display: flex;
    flex-direction: column;
    border-right: 1px solid #ccc;
}
.tree {
    height: 205px;
    padding: 0 3px 0 7px;
    list-style: none;
    background: #fff;
}
.tree li {
    display: flex;
    align-items: center;
    height: 18px;
    font-size: 14px;
    font-weight: bold;
}
.tree svg {
    width: 18px;
    height: 18px;
}
.expander {
    width: 13px;
}
.tree .expander svg {
    width: 12px;
}
.tree button {
    width: 14px;
    height: 14px;
    margin-left: auto;
}
.tree button svg {
    width: 14px;
    height: 14px;
}
.add-style {
    background: #00a844;
}
.splitter {
    height: 7px;
    font-size: 7px;
    line-height: 7px;
    text-align: center;
    color: #ccc;
}
.apply-row {
    display: flex;
    gap: 5px;
}
.pick-style {
    width: 24px;
    margin: 0 31px 0 5px;
}
.pick-style svg {
    width: 24px;
    height: 24px;
}
.push {
    width: 97px;
    height: 24px;
    padding-bottom: 2px;
    border: 1px solid #c4c4c4;
    background: #e6e6e6;
    white-space: nowrap;
}
.push:disabled {
    flex: 1;
    border-color: #e6e6e6;
    background: #ededed;
    color: #dfdfdf;
}
.props {
    flex: 1;
    background: linear-gradient(90deg, #fff, #eee 16px);
}
.docker-tabs {
    width: 20px;
    padding-top: 24px;
    background: #e8eae9;
}
.side-tab {
    width: 20px;
    height: 99px;
    display: flex;
    flex-direction: column;
    align-items: center;
    gap: 4px;
    padding-top: 3px;
    background: linear-gradient(#aaa, #c4c4c4 60%, #b9b9b9);
}
.side-tab svg {
    width: 18px;
    height: 18px;
}
.side-tab span {
    writing-mode: vertical-rl;
    text-orientation: sideways;
}
.side-add svg {
    width: 20px;
    height: 24px;
}
.palettes {
    display: flex;
    gap: 3px;
    padding: 0 1px 0 2px;
}
.palette {
    width: 18px;
    display: flex;
    flex-direction: column;
}
.palette-head {
    display: flex;
    flex-direction: column;
    height: 65px;
}
.palette-head svg {
    width: 18px;
    height: 18px;
}
.faint {
    opacity: 0.35;
}
.swatch.current {
    border: 2px solid #555;
}
.palette-foot {
    margin-top: auto;
    padding-bottom: 5px;
}
.palette-foot svg {
    width: 18px;
    height: 18px;
}

/* status bar */
.status-bar {
    height: 36px;
    display: flex;
    align-items: center;
    padding: 0 9px 0 7px;
    background: #eee;
}
.hint {
    margin-left: 5px;
    white-space: nowrap;
}
.object-info {
    margin-left: 22px;
    white-space: nowrap;
}
.color-info {
    display: flex;
    align-items: center;
    margin: 0 204px 0 auto;
}
.info-icon {
    width: 20px;
    height: 20px;
}
.chip {
    width: 21px;
    height: 21px;
    margin-right: 5px;
    border: 1px solid #aaa;
}
.dark-chip {
    background: #372b29;
}
.cmyk {
    display: flex;
    gap: 12px;
    margin-right: 12px;
    font-size: 12px;
}
.proof {
    width: 18px;
    height: 18px;
}

/* overlays */
.ime {
    position: absolute;
    left: 1255px;
    bottom: 57px;
    width: 62px;
    height: 27px;
    display: flex;
    align-items: center;
    justify-content: center;
    gap: 3px;
    border: 1px solid #aaa;
    border-radius: 5px;
    background: #fff;
    box-shadow: 1px 2px 3px rgba(0, 0, 0, 0.4);
    color: #444;
}
.ime svg {
    width: 12px;
    height: 14px;
}
.watermark {
    position: absolute;
    right: 10px;
    bottom: 7px;
    display: flex;
    align-items: center;
    opacity: 0.85;
}
.watermark > svg {
    width: 42px;
    height: 44px;
}
.watermark div {
    display: flex;
    flex-direction: column;
}
.watermark strong {
    font-size: 21px;
    line-height: 24px;
    color: #5a9bdc;
}
.watermark span {
    font: 16px/20px "Open Sans", sans-serif;
    color: #6cc86a;
}
```
FILE: script.js
```js
const NS = 'http://www.w3.org/2000/svg';
const colors = [
    '#372b29', '#494846', '#5b5c5c', '#6f7070', '#858687', '#9b9c9b', '#b1b2b1', '#c6c7c6', '#d9dad9', '#ededed', '#fafafa',
    '#2f2f87', '#00a0ea', '#009a4c', '#fff000', '#e60024', '#e4007f', '#b0508a', '#eb8200', '#f5b3b2', '#85736a',
    '#d4cbe6', '#a596cf', '#6a89c8', '#7b6ab0', '#9080ac', '#576b8e', '#5e606f', '#7083a8', '#008cd6', '#9fd8f4',
    '#b8cfdc', '#93a8b2', '#6a7880', '#536062', '#577570', '#458a76', '#6d9796', '#5fab93', '#61a669', '#65c3d3',
    '#5ca9b3', '#b5cdb9', '#d3ead0', '#9dd3a5'
];

function add(svg, name, attrs, text) {
    const el = document.createElementNS(NS, name);
    for (const key in attrs) el.setAttribute(key, attrs[key]);
    if (text !== undefined) el.textContent = text;
    svg.appendChild(el);
}

// 5 mm per small tick, 50 mm per label
const STEP = 10.87;

function drawHorizontal() {
    const svg = document.getElementById('rulerH');
    const zero = 519;
    for (let i = -47; i <= 90; i++) {
        const x = Math.round(zero + i * STEP) + 0.5;
        if (x > svg.clientWidth - 4) break;
        const major = i % 10 === 0;
        add(svg, 'line', { class: 'tick', x1: x, x2: x, y1: major ? 11 : 14, y2: major ? 16 : 15 });
        if (major && x < svg.clientWidth - 30) add(svg, 'text', { x: x + 1, y: 10 }, Math.abs(i * 5));
    }
    add(svg, 'text', { x: svg.clientWidth - 13, y: 10 }, '毫米');
    add(svg, 'line', { class: 'marker', x1: 770.5, x2: 770.5, y1: 1, y2: 17 });
}

function drawVertical() {
    const svg = document.getElementById('rulerV');
    const zero = 727;
    for (let i = -7; i <= 66; i++) {
        const y = Math.round(zero - i * STEP) + 0.5;
        const major = i % 10 === 0;
        add(svg, 'line', { class: 'tick', x1: major ? 10 : 14, x2: 15, y1: y, y2: y });
        if (major) add(svg, 'text', { x: 1, y: 0, transform: `translate(11 ${y}) rotate(-90)` }, Math.abs(i * 5));
    }
    add(svg, 'line', { class: 'marker', x1: 0, x2: 16, y1: 300.5, y2: 300.5 });
}

function drawSwatches() {
    const box = document.getElementById('swatches');
    const none = document.createElement('button');
    none.className = 'swatch none';
    box.appendChild(none);
    colors.forEach(color => {
        const b = document.createElement('button');
        b.className = color === '#d3ead0' ? 'swatch current' : 'swatch';
        b.style.background = color;
        box.appendChild(b);
    });
}

drawHorizontal();
drawVertical();
drawSwatches();
```
